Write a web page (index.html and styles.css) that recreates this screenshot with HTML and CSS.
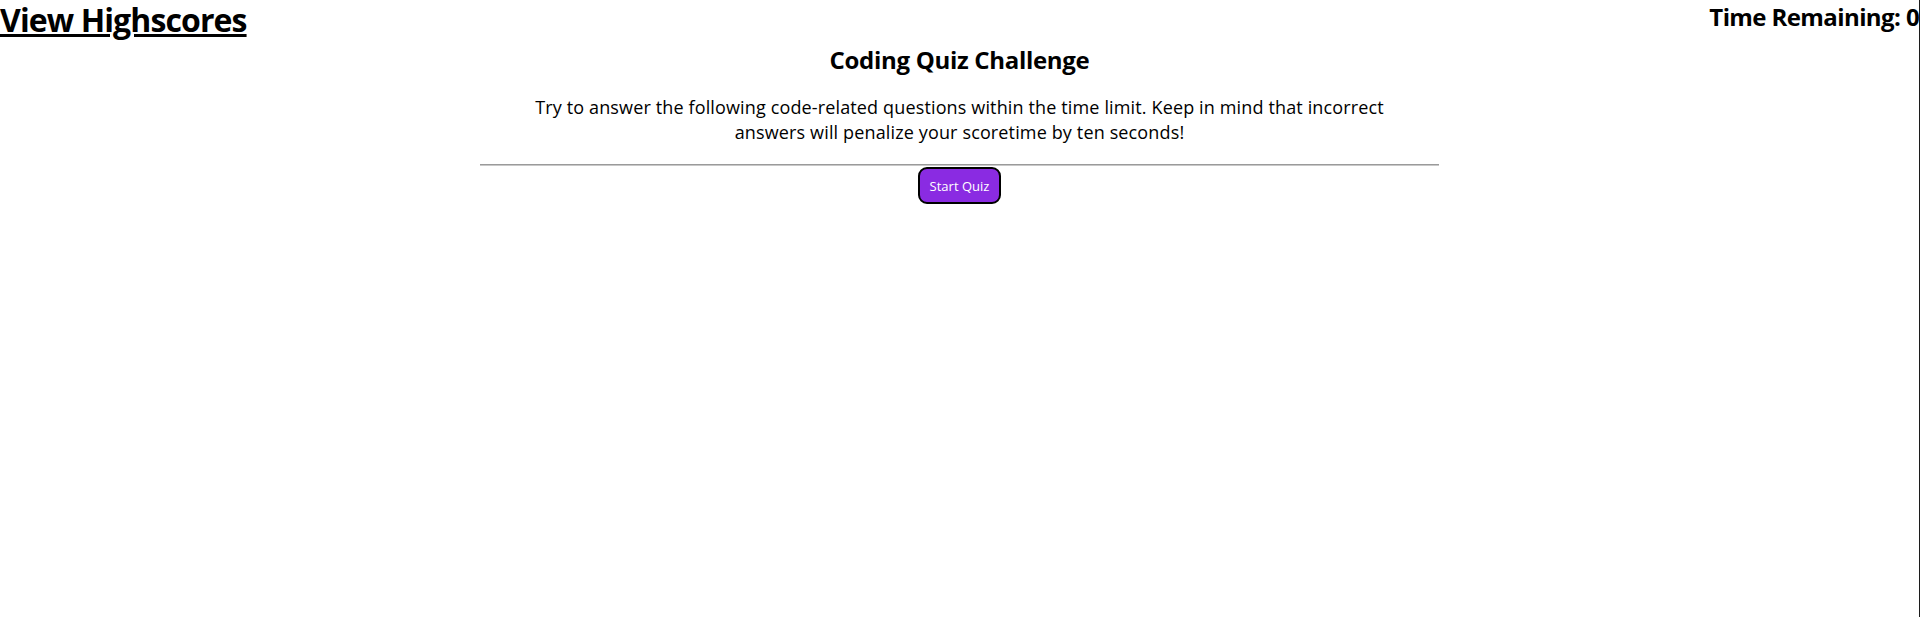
FILE: index.html
```html
<!DOCTYPE html>
<html lang="en">
<head>
<meta charset="utf-8">
<title>Coding Quiz</title>
<link rel="stylesheet" href="styles.css">
</head>
<body>
<header class="topbar">
  <a class="highscores" href="#">View Highscores</a>
  <div class="timer">Time Remaining: <span>0</span></div>
</header>
<main class="intro">
  <h2 class="title">Coding Quiz Challenge</h2>
  <p class="lead">Try to answer the following code-related questions within the time limit. Keep in mind that incorrect answers will penalize your scoretime by ten seconds!</p>
  <hr class="rule">
  <button class="start" type="button">Start Quiz</button>
</main>
</body>
</html>
```
FILE: styles.css
```css
html {
  height: 100%;
  box-sizing: border-box;
  border-right: 1px solid #1c1c1c;
}
body {
  margin: 0;
  font-family: "Open Sans", "Noto Sans", sans-serif;
  color: #000;
  background: #fff;
}
.topbar {
  display: flex;
  justify-content: space-between;
  align-items: flex-start;
  height: 40px;
}
.highscores {
  font-size: 32px;
  font-weight: 700;
  line-height: 40px;
  color: #000;
  text-decoration: underline;
  letter-spacing: -0.9px;
}
.timer {
  font-size: 24px;
  font-weight: 700;
  line-height: 34px;
  letter-spacing: -0.6px;
}
.intro {
  display: flex;
  flex-direction: column;
  align-items: center;
}
.title {
  margin: 4px 0 0;
  font-size: 24px;
  line-height: 32px;
  font-weight: 700;
  letter-spacing: -0.3px;
}
.lead {
  margin: 19px 0 19px;
  max-width: 900px;
  font-size: 18px;
  line-height: 25px;
  letter-spacing: 0.14px;
  text-align: center;
}
.rule {
  width: 50%;
  margin: 0;
  border: 0;
  border-top: 1px solid #9a9a9a;
  border-bottom: 1px solid #c8c8c8;
}
.start {
  margin-top: 1px;
  padding: 0 10px;
  height: 37px;
  font-family: inherit;
  font-size: 13px;
  color: #fff;
  background: #8a2be2;
  border: 2px solid #000;
  border-radius: 9px;
}
```
